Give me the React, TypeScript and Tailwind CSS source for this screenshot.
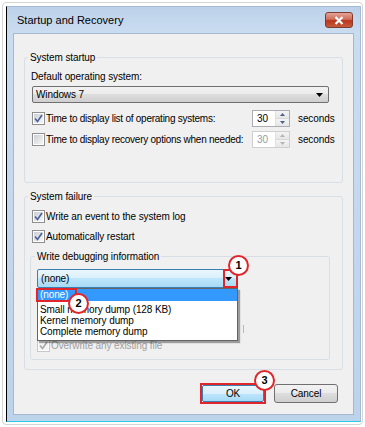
import React from "react";

const F = "font-['Liberation_Sans','Open_Sans',sans-serif]";

function Check({ checked = false, disabled = false }: { checked?: boolean; disabled?: boolean }) {
  return (
    <span
      className={`w-[13px] h-[13px] shrink-0 border ${
        disabled ? "border-[#c8c8c8]" : "border-[#8e8f8f]"
      } bg-white p-[1px] flex`}
    >
      <span
        className={`flex-1 flex items-center justify-center ${
          disabled
            ? "bg-[#f4f4f4]"
            : "bg-[linear-gradient(135deg,#cbcfd5,#f6f6f6)]"
        }`}
      >
        {checked && (
          <svg width="9" height="9" viewBox="0 0 9 9">
            <path
              d="M1 4.5 L3.5 7.5 L8 1"
              fill="none"
              stroke={disabled ? "#a8a8a8" : "#4a5f97"}
              strokeWidth="1.6"
            />
          </svg>
        )}
      </span>
    </span>
  );
}

function Spinner({ disabled = false }: { disabled?: boolean }) {
  return (
    <div
      className={`w-[38px] h-[17px] shrink-0 border ${
        disabled ? "border-[#cfcfcf] text-[#9a9a9a]" : "border-[#abadb3] text-black"
      } bg-white flex`}
    >
      <span className="flex-1 pl-[4px] leading-[15px]">30</span>
      <div className="w-[14px] flex flex-col border-l border-[#e0e0e0]">
        <div className="flex-1 flex items-center justify-center bg-[linear-gradient(#f4f4f4,#e6e6e6)] border-b border-[#d8d8d8]">
          <svg width="5" height="3" viewBox="0 0 5 3">
            <path d="M0 3 L2.5 0 L5 3Z" fill={disabled ? "#b5b5b5" : "#4d6185"} />
          </svg>
        </div>
        <div className="flex-1 flex items-center justify-center bg-[linear-gradient(#f4f4f4,#e6e6e6)]">
          <svg width="5" height="3" viewBox="0 0 5 3">
            <path d="M0 0 L2.5 3 L5 0Z" fill={disabled ? "#b5b5b5" : "#4d6185"} />
          </svg>
        </div>
      </div>
    </div>
  );
}

function Badge({ n }: { n: string }) {
  return (
    <div className="w-[21px] h-[21px] rounded-full border-2 border-[#e0262b] bg-white flex items-center justify-center text-[11px] font-bold text-black font-['Liberation_Sans',sans-serif] leading-none tracking-normal">
      {n}
    </div>
  );
}

export default function App() {
  return (
    <div className={`w-[365px] h-[427px] bg-white p-[2px] ${F} text-[10px] tracking-[-0.1px] text-black whitespace-nowrap`}>
      <div className="h-full border border-[#d4d4d4] rounded-[4px] pl-[3px] pr-[1px] pt-[3px] pb-[2px]">
        <div className="h-full flex flex-col border-l border-l-black border-b border-b-[#27c9ea] border-t border-t-[#a5b9d2] border-r border-r-[#a5b9d2] bg-[linear-gradient(to_bottom,#bcd2ea,#cadcf0_26px,#bcd3ec)]">
          {/* Title bar */}
          <div className="h-[26px] shrink-0 flex items-center pl-[10px] pr-[7px]">
            <span className="text-[11px] tracking-normal text-black flex-1">Startup and Recovery</span>
            <div className="w-[28px] h-[16px] rounded-[3px] border border-[#7d3c30] bg-[linear-gradient(to_bottom,#e3a597,#cf6c58_45%,#b8351e_55%,#c65a3c)] flex items-center justify-center">
              <svg width="10" height="9" viewBox="0 0 10 9">
                <path d="M1.5 1 L8.5 8 M8.5 1 L1.5 8" stroke="#ffffff" strokeWidth="2.2" />
              </svg>
            </div>
          </div>
          {/* Content */}
          <div className="flex-1 ml-[6px] mr-[6px] mb-[6px] bg-[#f0f0f0] border border-[#a6b8cc] relative flex flex-col">
            {/* System startup group */}
            <div className="mt-[23px] ml-[10px] mr-[10px] h-[126px] border border-[#d5dfe5] rounded-[3px] pl-[7px] pr-[13px] flex flex-col">
              <span className="-mt-[8px] h-[15px] leading-[15px] self-start ml-[-4px] px-[2px] bg-[#f0f0f0]">System startup</span>
              <div className="mt-[4px] h-[15px] leading-[15px] -ml-[1px]">Default operating system:</div>
              <div className="mt-[2px] h-[17px] border border-[#707070] rounded-[2px] bg-[linear-gradient(to_bottom,#f2f2f2,#ebebeb_50%,#dddddd_50%,#cfcfcf)] flex items-center pl-[3px] pr-[5px]">
                <span className="flex-1 leading-[15px]">Windows 7</span>
                <svg width="7" height="4" viewBox="0 0 7 4">
                  <path d="M0 0 L7 0 L3.5 4Z" fill="#000" />
                </svg>
              </div>
              <div className="mt-[7px] h-[17px] grid grid-cols-[212px_38px_auto] gap-x-[8px] items-center">
                <div className="flex items-center tracking-[-0.25px]">
                  <Check checked />
                  <span className="ml-[1px]">Time to display list of operating systems:</span>
                </div>
                <Spinner />
                <span>seconds</span>
              </div>
              <div className="mt-[4px] h-[17px] grid grid-cols-[212px_38px_auto] gap-x-[8px] items-center">
                <div className="flex items-center tracking-[-0.25px]">
                  <Check />
                  <span className="ml-[1px]">Time to display recovery options when needed:</span>
                </div>
                <Spinner disabled />
                <span>seconds</span>
              </div>
            </div>
            {/* System failure group */}
            <div className="mt-[13px] ml-[10px] mr-[10px] h-[174px] border border-[#d5dfe5] rounded-[3px] pl-[7px] pr-[12px] flex flex-col">
              <span className="-mt-[8px] h-[15px] leading-[15px] self-start ml-[-4px] px-[2px] bg-[#f0f0f0]">System failure</span>
              <div className="mt-[6px] h-[13px] flex items-center">
                <Check checked />
                <span className="ml-[1px]">Write an event to the system log</span>
              </div>
              <div className="mt-[7px] h-[13px] flex items-center">
                <Check checked />
                <span className="ml-[1px]">Automatically restart</span>
              </div>
              {/* Write debugging information */}
              <div className="mt-[13px] -ml-[2px] h-[104px] border border-[#d5dfe5] rounded-[3px] pl-[6px] pr-[8px] flex flex-col relative">
                <span className="-mt-[8px] h-[15px] leading-[15px] self-start ml-[-2px] px-[2px] bg-[#f0f0f0]">Write debugging information</span>
                <div className="mt-[5px] w-[200px] h-[19px] border border-[#3c7fb1] rounded-[2px] bg-[linear-gradient(to_bottom,#eaf6fd,#d9f0fc_50%,#bee6fd_50%,#a7d9f5)] flex items-center pl-[3px] pr-[4px] relative">
                  <span className="flex-1 leading-[15px]">(none)</span>
                  <svg width="7" height="4" viewBox="0 0 7 4">
                    <path d="M0 0 L7 0 L3.5 4Z" fill="#000" />
                  </svg>
                  <div className="absolute right-[-2px] top-[-1px] w-[15px] h-[19px] border-2 border-[#e0262b]" />
                  <div className="absolute right-[-13px] top-[-15px]">
                    <Badge n="1" />
                  </div>
                </div>
                <div className="mt-[37px] h-[8px] flex justify-start">
                  <div className="ml-[203px] w-[4px] h-[8px] border-r border-[#b8b8b8]" />
                </div>
                <div className="mt-[6px] h-[13px] flex items-center text-[#a0a0a0]">
                  <Check checked disabled />
                  <span className="ml-[1px]">Overwrite any existing file</span>
                </div>
                {/* dropdown list */}
                <div className="absolute left-[6px] top-[31px] w-[201px] h-[53px] bg-white border border-[#646464] shadow-[2px_2px_1px_rgba(0,0,0,0.35)] flex flex-col">
                  <div className="h-[12px] leading-[12px] bg-[#3399ff] text-white pl-[2px] relative">
                    (none)
                    <div className="absolute left-[-2px] top-[-1px] w-[41px] h-[14px] border-2 border-[#e0262b]" />
                    <div className="absolute left-[30px] top-[4px]">
                      <Badge n="2" />
                    </div>
                  </div>
                  <div className="mt-[3px] h-[11px] leading-[11px] pl-[2px]">Small memory dump (128 KB)</div>
                  <div className="h-[11px] leading-[11px] pl-[2px]">Kernel memory dump</div>
                  <div className="h-[11px] leading-[11px] pl-[2px]">Complete memory dump</div>
                </div>
              </div>
            </div>
            {/* Buttons */}
            <div className="mt-[13px] flex justify-end pr-[15px] gap-[8px]">
              <div className="relative">
                <div className="w-[66px] h-[21px] border-2 border-[#e0262b] flex">
                  <div className="flex-1 border border-[#3c7fb1] rounded-[2px] bg-[linear-gradient(to_bottom,#eaf6fd,#d9f0fc_50%,#bee6fd_50%,#a7d9f5)] flex items-center justify-center leading-none">
                    OK
                  </div>
                </div>
                <div className="absolute right-[-9px] top-[-13px]">
                  <Badge n="3" />
                </div>
              </div>
              <div className="w-[64px] h-[19px] mt-[1px] border border-[#707070] rounded-[3px] bg-[linear-gradient(to_bottom,#f2f2f2,#ebebeb_50%,#dddddd_50%,#cfcfcf)] flex items-center justify-center leading-none">
                Cancel
              </div>
            </div>
          </div>
        </div>
      </div>
    </div>
  );
}
